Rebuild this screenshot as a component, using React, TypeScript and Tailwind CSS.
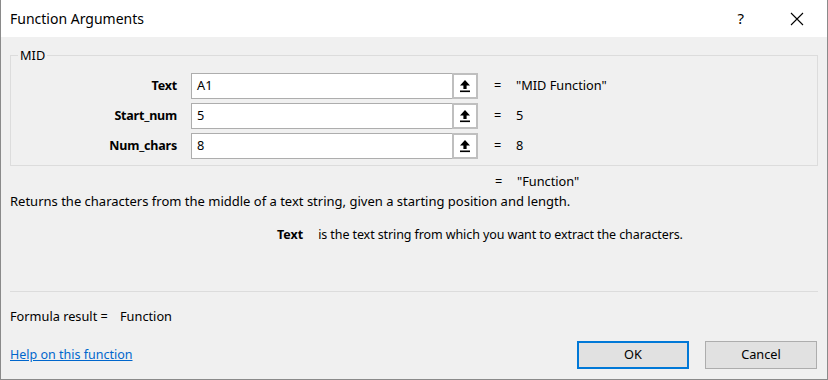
import React from "react";

const font = { fontFamily: '"Noto Sans", "Liberation Sans", sans-serif' };

function RefBtn() {
  return (
    <div className="w-[26px] h-[26px] border-2 border-[#bfbfbf] bg-white flex items-center justify-center">
      <svg width="12" height="14" viewBox="0 0 12 14">
        <path d="M6 1 L11 6.5 L7.6 6.5 L7.6 10 L4.4 10 L4.4 6.5 L1 6.5 Z" fill="#000" />
        <rect x="1" y="11.5" width="10" height="1.6" fill="#000" />
      </svg>
    </div>
  );
}

function ArgRow({ label, value, result }: { label: string; value: string; result: string }) {
  return (
    <div className="flex items-center h-[26px]">
      <div className="w-[166px] text-right font-bold text-[12.5px] tracking-[-0.2px]">{label}</div>
      <div className="ml-[14px] flex h-[26px]">
        <div className="w-[261px] h-[26px] bg-white border border-[#adadad] border-r-0 flex items-center pl-[5px] text-[12.75px]">
          {value}
        </div>
        <RefBtn />
      </div>
      <div className="ml-[16px] w-[22px] text-[12.75px]">=</div>
      <div className="text-[12.75px]">{result}</div>
    </div>
  );
}

export default function App() {
  return (
    <div style={font} className="w-[828px] h-[380px] flex flex-col bg-[#f0f0f0] border-l border-r border-b border-[#8a8a8a] text-black overflow-hidden">
      <div className="h-[37px] bg-white flex items-center pl-[9px] shrink-0">
        <div className="text-[14px]">Function Arguments</div>
        <div className="ml-auto flex items-center">
          <div className="text-[15px] mr-[46px]">?</div>
          <svg width="14" height="14" viewBox="0 0 14 14" className="mr-[23px]">
            <path d="M1 1 L13 13 M13 1 L1 13" stroke="#000" strokeWidth="1.1" />
          </svg>
        </div>
      </div>
      <div className="flex flex-col px-[9px] flex-1">
        <div className="relative mt-[18px] h-[111px] border border-[#dcdcdc] pt-[17px] flex flex-col gap-[4px]">
          <div className="absolute left-[7px] top-[-9px] px-[2px] bg-[#f0f0f0] text-[12.75px] leading-[16px]">MID</div>
          <ArgRow label="Text" value="A1" result={'"MID Function"'} />
          <ArgRow label="Start_num" value="5" result="5" />
          <ArgRow label="Num_chars" value="8" result="8" />
        </div>
        <div className="flex items-center h-[16px] mt-[8px] text-[12.75px]">
          <div className="ml-[485px] w-[22px]">=</div>
          <div>"Function"</div>
        </div>
        <div className="h-[16px] mt-[4px] flex items-center text-[13px]">
          Returns the characters from the middle of a text string, given a starting position and length.
        </div>
        <div className="h-[16px] mt-[17px] flex items-center text-[12.5px]">
          <div className="ml-[267px] font-bold">Text</div>
          <div className="ml-[15px] tracking-[-0.1px]">is the text string from which you want to extract the characters.</div>
        </div>
        <div className="mt-[48px] h-px bg-[#dcdcdc]" />
        <div className="h-[16px] mt-[17px] flex items-center text-[12.75px]">
          <div className="w-[110px]">Formula result =</div>
          <div>Function</div>
        </div>
        <div className="mt-[16px] h-[28px] flex items-center">
          <a className="text-[12.5px] text-[#0066cc] underline">Help on this function</a>
          <div className="ml-auto flex gap-[16px] mr-[1px]">
            <div className="w-[112px] h-[28px] border-2 border-[#0078d7] bg-[#e1e1e1] flex items-center justify-center text-[12.75px]">OK</div>
            <div className="w-[112px] h-[28px] border border-[#adadad] bg-[#e1e1e1] flex items-center justify-center text-[12.75px]">Cancel</div>
          </div>
        </div>
      </div>
    </div>
  );
}
